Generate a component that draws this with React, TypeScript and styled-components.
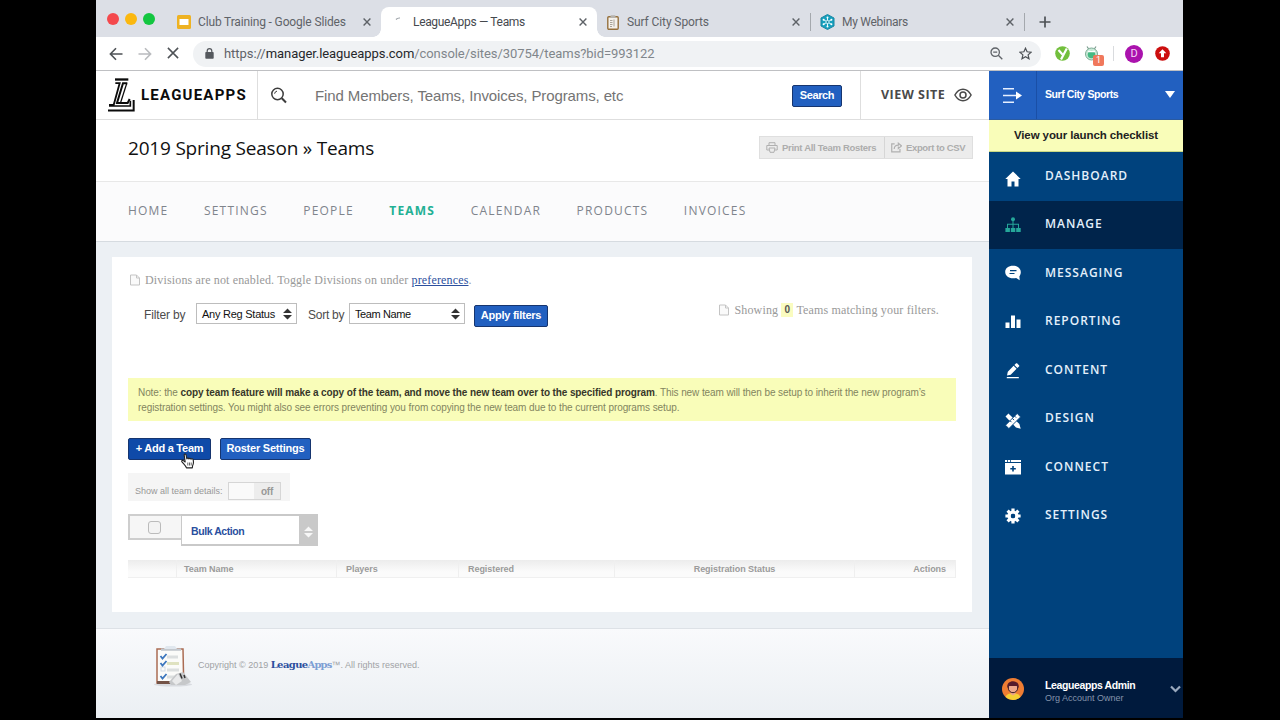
import React from 'react';
import styled, { createGlobalStyle, css } from 'styled-components';

const sans = '"Liberation Sans", Arial, sans-serif';
const open = '"Open Sans", sans-serif';
const serif = '"Liberation Serif", Georgia, serif';
const chromeFont = 'Roboto, sans-serif';

const Global = createGlobalStyle`
  * { box-sizing: border-box; }
  body { margin: 0; background: #000; overflow: hidden; }
  svg { display: block; flex: none; }
`;

const Screen = styled.div`
  width: 1280px;
  height: 720px;
  padding: 0 97px 2px 96px;
  background: #000;
`;
const Browser = styled.div`
  display: flex;
  flex-direction: column;
  height: 718px;
  background: #fff;
  overflow: hidden;
`;

/* ---------- Browser chrome ---------- */
const TabStrip = styled.div`
  display: flex;
  height: 37px;
  padding-top: 7px;
  background: #dcdfe6;
  font: 12px ${chromeFont};
`;
const Lights = styled.div`
  display: flex;
  gap: 6px;
  width: 73px;
  padding: 6px 0 0 11px;
`;
const Light = styled.i<{ $c: string }>`
  width: 12px;
  height: 12px;
  border-radius: 50%;
  background: ${(p) => p.$c};
`;
const Tab = styled.div<{ $w: number; $active?: boolean; $pad: number; $ls: number }>`
  position: relative;
  display: flex;
  align-items: center;
  width: ${(p) => p.$w}px;
  height: 30px;
  padding: 0 10px 0 ${(p) => p.$pad}px;
  letter-spacing: ${(p) => p.$ls}px;
  color: ${(p) => (p.$active ? '#45494e' : '#5f6368')};
  ${(p) =>
    p.$active &&
    css`
      background: #fff;
      border-radius: 8px 8px 0 0;
      &::before,
      &::after {
        content: '';
        position: absolute;
        bottom: 0;
        width: 8px;
        height: 8px;
      }
      &::before { left: -8px; background: radial-gradient(circle at 0 0, transparent 7.5px, #fff 8px); }
      &::after { right: -8px; background: radial-gradient(circle at 100% 0, transparent 7.5px, #fff 8px); }
    `}
`;
const TabIcon = styled.span<{ $w: number }>`
  display: flex;
  width: ${(p) => p.$w}px;
`;
const TabTitle = styled.span`
  flex: 1;
  white-space: nowrap;
`;
const TabDivider = styled.i`
  width: 1px;
  height: 18px;
  margin-top: 6px;
  background: #a4a8ad;
`;
const NewTab = styled.div`
  padding: 9px 0 0 14px;
`;
const Toolbar = styled.div`
  display: flex;
  align-items: center;
  height: 34px;
  padding: 0 12px 0 13px;
  border-bottom: 1px solid #bfc0c3;
  background: #fff;
`;
const NavIcons = styled.div`
  display: flex;
  gap: 15px;
  width: 84px;
`;
const Omnibox = styled.div`
  display: flex;
  align-items: center;
  width: 848px;
  height: 26px;
  padding: 0 9px 0 12px;
  border-radius: 13px;
  background: #f0f2f4;
  font: 13px ${chromeFont};
  color: #80868b;
`;
const Url = styled.span`
  flex: 1;
  margin-left: 10px;
  white-space: nowrap;
  letter-spacing: -0.06px;
  b { font-weight: 400; color: #26282b; }
  i { font-style: normal; color: #5f6368; }
`;
const OmniActions = styled.div`
  display: flex;
  gap: 16px;
`;
const Extensions = styled.div`
  display: flex;
  align-items: center;
  padding-left: 14px;
`;
const RobotSlot = styled.div`
  position: relative;
  margin-left: 14px;
`;
const CountBadge = styled.span`
  position: absolute;
  left: 9px;
  top: 9px;
  width: 11px;
  height: 11px;
  border-radius: 2px;
  background: #f0785c;
  color: #fff;
  font: 9px/11px ${chromeFont};
  text-align: center;
`;
const ExtDivider = styled.i`
  width: 1px;
  height: 15px;
  margin: 0 11px 0 14px;
  background: #d9dbde;
`;
const Avatar = styled.span`
  width: 18px;
  height: 18px;
  border-radius: 50%;
  background: #aa12ad;
  color: #f5d6f5;
  font: 11px/18px ${chromeFont};
  text-align: center;
`;
const UpdateDot = styled.span`
  display: flex;
  margin-left: 12px;
`;

/* ---------- Page shell ---------- */
const Page = styled.div`
  display: flex;
  height: 647px;
`;
const Main = styled.main`
  display: flex;
  flex-direction: column;
  width: 893px;
  background: #ecf0f4;
  font-family: ${sans};
`;
const Header = styled.header`
  display: flex;
  height: 49px;
  background: #fff;
  border-bottom: 1px solid #dedede;
`;
const Brand = styled.div`
  display: flex;
  width: 162px;
  padding: 7px 0 0 12px;
  border-right: 1px solid #dedede;
`;
const BrandName = styled.span`
  margin: 7px 0 0 6px;
  font: 700 15px/20px Roboto, ${open};
  letter-spacing: 1.22px;
  color: #0b0b0b;
`;
const SearchBar = styled.div`
  display: flex;
  align-items: center;
  width: 603px;
  padding: 1px 18px 0 12px;
  border-right: 1px solid #dedede;
`;
const Placeholder = styled.span`
  flex: 1;
  margin-left: 27px;
  font-size: 15px;
  letter-spacing: -0.11px;
  color: #747474;
  white-space: nowrap;
`;
const ViewSite = styled.div`
  display: flex;
  align-items: center;
  gap: 9px;
  padding-left: 20px;
  font: 700 12.5px ${open};
  letter-spacing: 0.5px;
  color: #4a4a4a;
  white-space: nowrap;
  span { margin-top: -2px; }
`;
const Button = styled.button<{ $w: number; $ls?: number; $dark?: boolean }>`
  width: ${(p) => p.$w}px;
  height: 22px;
  padding: 0 0 2px;
  border: 1px solid #16356f;
  border-radius: 2px;
  background: ${(p) => (p.$dark ? '#0f4aa8' : '#2260c0')};
  color: #fff;
  font: 700 11px ${sans};
  letter-spacing: ${(p) => p.$ls ?? -0.25}px;
  white-space: nowrap;
`;
const TitleBar = styled.div`
  display: flex;
  justify-content: space-between;
  height: 62px;
  padding: 16px 16px 0 32px;
  background: #fff;
  border-bottom: 1px solid #e8e8e8;
`;
const Title = styled.h1`
  margin: 0;
  font: 400 19px/25px ${open};
  letter-spacing: -0.2px;
  color: #111;
`;
const ToolGroup = styled.div`
  display: flex;
  width: 214px;
  height: 23px;
  border: 1px solid #dfdfdf;
  background: #ececec;
  color: #adadad;
  font: 700 9.5px ${sans};
`;
const Tool = styled.div<{ $w: number; $ls: number }>`
  display: flex;
  align-items: center;
  gap: 4px;
  width: ${(p) => p.$w}px;
  padding-left: 6px;
  letter-spacing: ${(p) => p.$ls}px;
  white-space: nowrap;
  & + & { border-left: 1px solid #d6d6d6; }
`;
const SubNav = styled.nav`
  display: flex;
  gap: 35.5px;
  height: 60px;
  padding: 0 32px;
  background: #fbfbfc;
  border-bottom: 1px solid #d6dbe0;
  font: 12px/57px ${open};
  letter-spacing: 1.2px;
  color: #7f848c;
`;
const SubItem = styled.span<{ $active?: boolean }>`
  ${(p) => p.$active && css`font-weight: 700; color: #22b094;`}
`;
const Card = styled.section`
  display: flex;
  flex-direction: column;
  width: 860px;
  height: 355px;
  margin: 15px 0 0 16px;
  padding: 13px 16px 0;
  background: #fff;
`;
const Muted = styled.div<{ $ls: number }>`
  display: flex;
  align-items: center;
  height: 20px;
  font: 12px ${serif};
  letter-spacing: ${(p) => p.$ls}px;
  color: #999;
  white-space: pre;
  svg { margin: 0 5px 0 2px; }
  a { color: #2c4f9e; text-decoration: underline; }
`;
const Zero = styled.b`
  width: 12px;
  margin-right: 3px;
  background: #fafcc0;
  color: #555;
  font: 700 10px/14px ${sans};
  text-align: center;
`;
const FilterRow = styled.div`
  display: flex;
  justify-content: space-between;
  height: 88px;
  padding-right: 17px;
`;
const Filters = styled.div`
  display: flex;
  padding: 13px 0 0 16px;
  font-size: 12px;
  color: #4c4c4c;
`;
const FilterLabel = styled.label<{ $w: number; $ls: number }>`
  width: ${(p) => p.$w}px;
  line-height: 22px;
  letter-spacing: ${(p) => p.$ls}px;
  white-space: nowrap;
  margin-top: 1px;
`;
const Select = styled.div<{ $w: number; $gap: number; $ls: number }>`
  display: flex;
  align-items: center;
  justify-content: space-between;
  width: ${(p) => p.$w}px;
  height: 21px;
  margin-right: ${(p) => p.$gap}px;
  padding: 0 4px 0 5px;
  border: 1.5px solid #bdbdbd;
  background: #fff;
  color: #111;
  font-size: 11px;
  letter-spacing: ${(p) => p.$ls}px;
`;
const SelectText = styled.span`
  line-height: 14px;
  white-space: nowrap;
`;
const Applied = styled.div`
  padding-top: 2px;
`;
const Results = styled.div`
  padding-top: 10px;
`;
const Notice = styled.p`
  height: 43px;
  margin: 0;
  padding: 8px 10px;
  background: #f9fdb9;
  color: #83855f;
  font-size: 10px;
  line-height: 14.5px;
  letter-spacing: -0.09px;
  white-space: nowrap;
  b { color: #37372a; letter-spacing: -0.11px; }
`;
const ButtonRow = styled.div`
  display: flex;
  gap: 9px;
  margin-top: 17px;
`;
const CursorAnchor = styled.div`
  position: relative;
  display: flex;
`;
const Cursor = styled.svg`
  position: absolute;
  left: 53px;
  top: 15px;
`;
const Details = styled.div`
  display: flex;
  justify-content: space-between;
  width: 162px;
  height: 28px;
  margin-top: 13px;
  padding: 9px 9px 1px 7px;
  background: #f5f5f5;
  color: #989898;
  font-size: 9px;
  line-height: 19px;
  white-space: nowrap;
`;
const Switch = styled.div`
  display: flex;
  width: 53px;
  height: 18px;
  border: 1px solid #d6d6d6;
  background: #fafafa;
`;
const SwitchOff = styled.span`
  width: 26px;
  margin-left: auto;
  background: #ededed;
  font-weight: 700;
  font-size: 10px;
  line-height: 18px;
  letter-spacing: -0.2px;
  text-align: center;
`;
const Bulk = styled.div`
  display: flex;
  align-items: flex-start;
  margin-top: 13px;
`;
const BulkCheck = styled.div`
  display: flex;
  width: 53px;
  height: 26px;
  padding: 5px 0 0 18px;
  border: 2px solid #cecece;
  border-right: 0;
  background: #f6f6f6;
`;
const Checkbox = styled.span`
  width: 13px;
  height: 13px;
  border: 1px solid #bbb;
  border-radius: 3px;
  background: #f3f3f3;
`;
const BulkSelect = styled.div`
  display: flex;
  width: 137px;
  height: 32px;
  border: 2px solid #c9c9c9;
  border-width: 2px 0 2px 1.5px;
  background: #fff;
  color: #2a4f9e;
  font: 700 10.5px/31px ${sans};
  letter-spacing: -0.42px;
`;
const BulkLabel = styled.span`
  flex: 1;
  padding-left: 9px;
`;
const BulkArrow = styled.span`
  display: flex;
  align-items: center;
  justify-content: center;
  width: 19px;
  padding-top: 3px;
  background: #c9c9c9;
`;
const TableHead = styled.div`
  display: grid;
  grid-template-columns: 49px 160px 122px 156px 240px 101px;
  height: 18px;
  margin-top: 14px;
  border-bottom: 1px solid #f0f0f0;
  background: linear-gradient(#ececec, #fbfbfb 70%);
  color: #9b9b9b;
  font: 700 9px/18px ${sans};
`;
const Th = styled.span<{ $align?: string; $pad?: string }>`
  padding: ${(p) => p.$pad ?? '0 9px'};
  border-right: 1px solid #efefef;
  letter-spacing: -0.05px;
  text-align: ${(p) => p.$align ?? 'left'};
`;
const Footer = styled.footer`
  display: flex;
  flex: 1;
  margin-top: 16px;
  padding: 16px 0 0 57px;
  border-top: 1px solid #dde1e6;
  background: linear-gradient(#f9fafc, #ebeff3);
  color: #a0a2a5;
  font-size: 9px;
  line-height: 41px;
`;
const Copyright = styled.div`
  display: flex;
  margin-left: 4px;
  white-space: pre;
`;
const FootBrand = styled.span<{ $light?: boolean }>`
  font: 700 10px/40px "DejaVu Serif", serif;
  letter-spacing: ${(p) => (p.$light ? -0.9 : -0.6)}px;
  color: ${(p) => (p.$light ? '#7d9fd4' : '#2c4f9e')};
`;

/* ---------- Sidebar ---------- */
const Sidebar = styled.aside`
  display: flex;
  flex-direction: column;
  width: 194px;
  background: #00427d;
  color: #fff;
`;
const OrgBar = styled.div`
  display: flex;
  height: 49px;
  background: #2260c0;
  border-bottom: 1px solid #2a5aa0;
`;
const Collapse = styled.div`
  display: flex;
  align-items: center;
  width: 48px;
  padding-left: 14px;
  border-right: 1px solid #1a4fa6;
`;
const OrgName = styled.div`
  display: flex;
  flex: 1;
  align-items: center;
  justify-content: space-between;
  padding: 0 8px 2px;
  font: 700 10.5px ${sans};
  letter-spacing: -0.42px;
`;
const Checklist = styled.div`
  height: 32px;
  border-bottom: 1px solid #c8d884;
  background: #f9fdb9;
  color: #222;
  font: 700 11.5px/31px ${sans};
  letter-spacing: -0.1px;
  text-align: center;
`;
const Menu = styled.div`
  flex: 1;
`;
const MenuItem = styled.div<{ $active?: boolean; $drop?: number }>`
  display: flex;
  align-items: center;
  height: 48.5px;
  padding-left: 16px;
  background: ${(p) => (p.$active ? '#00244b' : 'transparent')};
  font: 600 12px ${open};
  letter-spacing: 1px;
  color: #e4f0fb;
  svg { margin: ${(p) => p.$drop ?? 0}px 24px 0 0; color: ${(p) => (p.$active ? '#25a79a' : '#fff')}; }
  span { margin-top: -2px; }
`;
const User = styled.div`
  display: flex;
  align-items: center;
  height: 60px;
  padding: 2px 2px 0 13px;
  background: #001a3d;
`;
const UserText = styled.div`
  flex: 1;
  margin: 4px 0 0 21px;
  font: 700 10.5px/13px ${sans};
  letter-spacing: -0.38px;
  small {
    display: block;
    font: 9px/12px ${sans};
    letter-spacing: 0;
    color: #8494ab;
  }
`;

/* ---------- Icons ---------- */
const Cross = ({ s = 8, c = '#5f6368', w = 1.4 }) => (
  <svg width={s} height={s} viewBox="0 0 8 8" stroke={c} strokeWidth={w} fill="none">
    <path d="M.6.6l6.8 6.8M7.4.6L.6 7.4" />
  </svg>
);
const Doc = () => (
  <svg width="10" height="12" viewBox="0 0 10 12" fill="#fafafa" stroke="#c4c4c4">
    <path d="M.5 1h6L9.5 4v7H.5zM6.5 1v3h3" />
  </svg>
);
const Arrows = ({ c = '#333' }) => (
  <svg width="9" height="12" viewBox="0 0 9 12" fill={c}>
    <path d="M4.500 .5L9 5H0zM4.500 11.500L9 7H0z" />
  </svg>
);
const Hexagon = () => (
  <svg width="15" height="16" viewBox="0 0 15 16">
    <path d="M7.5.5L14 4v8l-6.500 3.500L1 12V4z" fill="#16a0bd" stroke="#1b86a3" strokeLinejoin="round" />
    <g stroke="#e2f6fa" strokeWidth="1">
      <path d="M7.500 3v10M3.200 5.500l8.600 5M11.800 5.500l-8.600 5" />
    </g>
    <circle cx="7.500" cy="8" r="2" fill="#bfe9f2" />
    <circle cx="7.500" cy="8" r="1" fill="#14809c" />
    <g fill="#fff">
      <circle cx="7.500" cy="3.500" r="1" /><circle cx="7.500" cy="12.500" r="1" />
      <circle cx="3.600" cy="5.700" r="1" /><circle cx="11.400" cy="5.700" r="1" />
      <circle cx="3.600" cy="10.300" r="1" /><circle cx="11.400" cy="10.300" r="1" />
    </g>
  </svg>
);
const Clipboard = () => (
  <svg width="12" height="15" viewBox="0 0 12 15">
    <rect x=".8" y="1.800" width="10.400" height="12.400" rx="1" fill="#f4f1ec" stroke="#96703c" strokeWidth="1.400" />
    <rect x="3.500" y=".3" width="5" height="2.700" rx=".6" fill="#b6b3ad" />
    <path d="M3 5.500h2.500M3 7.500h2.500M3 9.500h2.500M7 4.500v7M3 11.500h2" stroke="#aaa49a" />
  </svg>
);
const LogoMark = () => (
  <svg width="27" height="34" viewBox="0 0 81 102" fill="none" stroke="#0b0b0b">
    <path d="M21 4.500h40" strokeWidth="7" />
    <path d="M22 15.500h13L17 81H3" strokeWidth="5.500" />
    <path d="M58 15.500H45L27 75h32l6-12" strokeWidth="6" />
    <path d="M56 17L38 73" strokeWidth="4" />
    <path d="M3 84h64V68" strokeWidth="5" />
    <path d="M0 97.500h77V66" strokeWidth="6" />
  </svg>
);
const icon = (children: React.ReactNode) => (
  <svg width="16" height="16" viewBox="0 0 16 16" fill="currentColor">{children}</svg>
);
const icons = {
  home: icon(<path d="M8 .5L.3 8H2.500v7.500h4V10.500h3v5h4V8h2.200z" />),
  manage: icon(
    <>
      <circle cx="8" cy="2.300" r="2" />
      <path d="M7.500 3.500h1V6.800h5.500V11h-1V7.800H8.500V11h-1V7.800H3V11H2V6.800h5.500z" />
      <path d="M.4 11h4.500v4H.4zM5.800 11h4.500v4H5.800zM11.200 11h4.500v4h-4.500z" />
    </>
  ),
  messaging: icon(
    <>
      <path d="M8 .8C3.500.8.2 3.300.2 7s3.300 6.300 7.800 6.300c1.200 0 2.300-.1 3.200-.4L14.700 15.300 14.400 11.300C15.300 10.200 15.800 8.700 15.800 7 15.800 3.300 12.500.8 8 .8z" />
      <path d="M5 5.700h6.500M4.500 8.500H9.500" stroke="#00427d" strokeWidth="1.200" />
    </>
  ),
  reporting: icon(<path d="M.5 8.500h4V14h-4zM6 1.500h4V14H6zM11.500 5.500h4V14h-4z" />),
  content: icon(<path d="M2 12.500L2.800 8.700 8.600 2.800l3 3L5.700 11.700zM9.400 2l1.500-1.500c.4-.4 1-.4 1.400 0l1.700 1.700c.4.4.4 1 0 1.400L12.400 5zM1.800 14h12v1.300h-12z" />),
  design: icon(
    <>
      <path d="M.5 3.400L3.400.5l11 10.600 1.300 4.600-4.700-1.300z" />
      <path d="M.5 12.200L12.200.5l3.400 3.400L3.900 15.600z" stroke="#00427d" strokeWidth=".9" />
      <path d="M5 7.700l1.500 1.500M7.300 5.400l1.700 1.700M9.600 3.100l1.500 1.500" stroke="#00427d" strokeWidth="1" />
    </>
  ),
  connect: icon(
    <>
      <path d="M0 1h2.200v2H0zM3 1h2.200v2H3zM6 1h10v2H6zM0 4h16v11.500H0z" />
      <path d="M8 7v5.500M5.300 9.700h5.500" stroke="#00427d" strokeWidth="1.600" />
    </>
  ),
  settings: icon(
    <>
      <circle cx="8" cy="8" r="3.900" fill="none" stroke="currentColor" strokeWidth="3.400" />
      <g stroke="currentColor" strokeWidth="3.200">
        <path d="M8 .4v3M8 12.600v3M.4 8h3M12.600 8h3M2.600 2.600l2 2M11.400 11.400l2 2M2.600 13.400l2-2M11.400 4.600l2-2" />
      </g>
      <circle cx="8" cy="8" r="2.200" fill="#00427d" />
    </>
  ),
};

const menu: { label: string; icon: React.ReactNode; active?: boolean; drop?: number }[] = [
  { label: 'DASHBOARD', icon: icons.home, drop: 5 },
  { label: 'MANAGE', icon: icons.manage, active: true },
  { label: 'MESSAGING', icon: icons.messaging },
  { label: 'REPORTING', icon: icons.reporting },
  { label: 'CONTENT', icon: icons.content, drop: 2 },
  { label: 'DESIGN', icon: icons.design, drop: 5 },
  { label: 'CONNECT', icon: icons.connect },
  { label: 'SETTINGS', icon: icons.settings },
];

const Chrome = () => (
  <>
    <TabStrip>
      <Lights>
        <Light $c="#f4494d" /><Light $c="#fbb80f" /><Light $c="#13c640" />
      </Lights>
      <Tab $w={212} $pad={8} $ls={-0.15}>
        <TabIcon $w={21}>
          <svg width="14" height="14" viewBox="0 0 14 14">
            <rect width="14" height="14" rx="1.500" fill="#eeb222" />
            <rect x="2.500" y="4" width="9" height="6" fill="#fff" />
          </svg>
        </TabIcon>
        <TabTitle>Club Training - Google Slides</TabTitle>
        <Cross />
      </Tab>
      <Tab $w={216} $pad={13} $ls={-0.33} $active>
        <TabIcon $w={19}>
          <svg width="8" height="12" viewBox="0 0 8 12" fill="none" stroke="#9aa0a6" strokeWidth="1.200">
            <path d="M2 3.500Q3.500 1.800 6 2" />
          </svg>
        </TabIcon>
        <TabTitle>LeagueApps — Teams</TabTitle>
        <Cross />
      </Tab>
      <Tab $w={213} $pad={10} $ls={-0.1}>
        <TabIcon $w={20}><Clipboard /></TabIcon>
        <TabTitle>Surf City Sports</TabTitle>
        <Cross />
      </Tab>
      <TabDivider />
      <Tab $w={213} $pad={9} $ls={-0.28}>
        <TabIcon $w={22}><Hexagon /></TabIcon>
        <TabTitle>My Webinars</TabTitle>
        <Cross />
      </Tab>
      <TabDivider />
      <NewTab>
        <svg width="12" height="12" viewBox="0 0 12 12" stroke="#4e5256" strokeWidth="1.700"><path d="M6 .5v11M.5 6h11" /></svg>
      </NewTab>
    </TabStrip>
    <Toolbar>
      <NavIcons>
        <svg width="14" height="14" viewBox="0 0 14 14" fill="none" stroke="#4e5256" strokeWidth="1.600"><path d="M13.500 7H1.500M7 1.300L1.400 7 7 12.700" /></svg>
        <svg width="14" height="14" viewBox="0 0 14 14" fill="none" stroke="#b9bbbe" strokeWidth="1.600"><path d="M.5 7h12M7 1.300L12.600 7 7 12.700" /></svg>
        <Cross s={12} c="#4e5256" w={1} />
      </NavIcons>
      <Omnibox>
        <svg width="9" height="11" viewBox="0 0 9 11"><rect x=".3" y="4" width="8.400" height="6.800" rx=".8" fill="#55595e" /><path d="M2.200 4.500V3a2.300 2.300 0 014.600 0v1.500" fill="none" stroke="#55595e" strokeWidth="1.200" /></svg>
        <Url><i>https://</i><b>manager.leagueapps.com</b>/console/sites/30754/teams?bid=993122</Url>
        <OmniActions>
          <svg width="13" height="13" viewBox="0 0 13 13" fill="none" stroke="#5f6368" strokeWidth="1.300"><circle cx="5.200" cy="5.200" r="4.200" /><path d="M8.300 8.300l4 4M3.200 5.200h4" /></svg>
          <svg width="13" height="13" viewBox="0 0 13 13" fill="none" stroke="#4e5256" strokeWidth="1.200"><path d="M6.500 1.200l1.600 3.600 4 .4-3 2.700.9 3.900-3.500-2-3.500 2 .9-3.900-3-2.700 4-.4z" /></svg>
        </OmniActions>
      </Omnibox>
      <Extensions>
        <svg width="15" height="15" viewBox="0 0 15 15"><circle cx="7.500" cy="7.500" r="7.300" fill="#72bf3c" /><path d="M3.500 4l4 4.500M11.800 2.500L6 13.500" stroke="#fff" strokeWidth="2.200" /></svg>
        <RobotSlot>
          <svg width="15" height="16" viewBox="0 0 15 16">
            <path d="M3 .5l2 3M12 .5l-2 3" stroke="#7a9a8c" strokeWidth="1.200" />
            <circle cx="7.500" cy="8" r="6" fill="#c9ead8" stroke="#7dab95" />
            <circle cx="7.500" cy="8.500" r="3.800" fill="#45b983" />
            <path d="M4 5.500h7" stroke="#fff" strokeWidth="1.500" />
          </svg>
          <CountBadge>1</CountBadge>
        </RobotSlot>
        <ExtDivider />
        <Avatar>D</Avatar>
        <UpdateDot>
          <svg width="15" height="15" viewBox="0 0 15 15"><circle cx="7.500" cy="7.500" r="7.300" fill="#cc0e0e" /><path d="M7.500 3.300l3.800 4H9v4H6v-4H3.700z" fill="#fff" /></svg>
        </UpdateDot>
      </Extensions>
    </Toolbar>
  </>
);

const PageHeader = () => (
  <>
    <Header>
      <Brand><LogoMark /><BrandName>LEAGUEAPPS</BrandName></Brand>
      <SearchBar>
        <svg width="18" height="18" viewBox="0 0 18 18" fill="none" stroke="#3c3c3c"><circle cx="7.500" cy="7" r="5.700" strokeWidth="1.500" /><path d="M11.800 11.300l4.200 4.200" strokeWidth="2" /><path d="M4.600 6.700A3 3 0 017 4.100" /></svg>
        <Placeholder>Find Members, Teams, Invoices, Programs, etc</Placeholder>
        <Button $w={50} $ls={-0.4}>Search</Button>
      </SearchBar>
      <ViewSite>
        <span>VIEW SITE</span>
        <svg width="18" height="14" viewBox="0 0 18 14" fill="none" stroke="#4a4a4a" strokeWidth="1.500"><path d="M.9 7C3 3.200 5.800 1.200 9 1.200S15 3.200 17.100 7C15 10.800 12.200 12.800 9 12.800S3 10.800.9 7z" /><circle cx="9" cy="7" r="3" /></svg>
      </ViewSite>
    </Header>
    <TitleBar>
      <Title>2019 Spring Season » Teams</Title>
      <ToolGroup>
        <Tool $w={124} $ls={-0.3}>
          <svg width="12" height="11" viewBox="0 0 12 11" fill="none" stroke="#b0b0b0"><path d="M3 3.500V.7h6v2.800M3 8H.8V3.500h10.400V8H9M3 6h6L8 10.300H4z" /></svg>
          Print All Team Rosters
        </Tool>
        <Tool $w={88} $ls={-0.35}>
          <svg width="11" height="11" viewBox="0 0 12 11" fill="none" stroke="#b0b0b0" strokeWidth="1.300"><path d="M4 1.500H.8v8.700h9V7" /><path d="M3.500 7c0-3 2-4 4.500-4V.8L11.500 3.800 8 6.500V4.500" /></svg>
          Export to CSV
        </Tool>
      </ToolGroup>
    </TitleBar>
    <SubNav>
      {['HOME', 'SETTINGS', 'PEOPLE', 'TEAMS', 'CALENDAR', 'PRODUCTS', 'INVOICES'].map((t) => (
        <SubItem key={t} $active={t === 'TEAMS'}>{t}</SubItem>
      ))}
    </SubNav>
  </>
);

const TeamsCard = () => (
  <Card>
    <Muted $ls={0.15}><Doc />Divisions are not enabled. Toggle Divisions on under <a>preferences</a>.</Muted>
    <FilterRow>
      <Filters>
        <FilterLabel $w={52} $ls={-0.15}>Filter by</FilterLabel>
        <Select $w={101} $gap={11} $ls={-0.25}><SelectText>Any Reg Status</SelectText><Arrows /></Select>
        <FilterLabel $w={41} $ls={-0.25}>Sort by</FilterLabel>
        <Select $w={116} $gap={9} $ls={-0.4}><SelectText>Team Name</SelectText><Arrows /></Select>
        <Applied><Button $w={74}>Apply filters</Button></Applied>
      </Filters>
      <Results>
        <Muted $ls={0.17}><Doc />Showing <Zero>0</Zero>Teams matching your filters.</Muted>
      </Results>
    </FilterRow>
    <Notice>
      Note: the <b>copy team feature will make a copy of the team, and move the new team over to the specified program</b>. This new team will then be setup to inherit the new program’s<br />
      registration settings. You might also see errors preventing you from copying the new team due to the current programs setup.
    </Notice>
    <ButtonRow>
      <CursorAnchor>
        <Button $w={83} $dark>+ Add a Team</Button>
        <Cursor width="14" height="16" viewBox="0 0 14 16" fill="#fff" stroke="#222" strokeWidth="1.100" strokeLinejoin="round">
          <path d="M5.500 14.900C5 13 2.600 10.900 1 8.900c-.8-1.100.6-2.100 1.600-1.200L4.200 9 3.200 2.200C3 .7 4.700.5 5 1.900L5.900 6c.1-1.300 1.900-1.300 2 0 .3-1.100 1.900-1 2.100.3.500-.9 2-.6 2.200.6.400 2 .5 4-.6 5.800l-.3 2.200z" />
          <path d="M6.800 9.500v3M8.500 9.500v3M10.200 9.500v3" strokeWidth=".7" />
        </Cursor>
      </CursorAnchor>
      <Button $w={91} $ls={-0.22}>Roster Settings</Button>
    </ButtonRow>
    <Details>Show all team details:<Switch><SwitchOff>off</SwitchOff></Switch></Details>
    <Bulk>
      <BulkCheck><Checkbox /></BulkCheck>
      <BulkSelect><BulkLabel>Bulk Action</BulkLabel><BulkArrow><Arrows c="#f7f7f7" /></BulkArrow></BulkSelect>
    </Bulk>
    <TableHead>
      <Th /><Th $pad="0 7px">Team Name</Th><Th $pad="0 9px">Players</Th><Th>Registered</Th><Th $align="center">Registration Status</Th><Th $align="right">Actions</Th>
    </TableHead>
  </Card>
);

const PageFooter = () => (
  <Footer>
    <svg width="41" height="44" viewBox="0 0 41 44">
      <ellipse cx="20" cy="39.500" rx="19" ry="2" fill="#d8dbe0" />
      <path d="M4 4h26l.7 34H4z" fill="#fbfbf9" stroke="#ab6c53" strokeWidth="1.500" />
      <path d="M4 36h20v3H4z" fill="#745347" />
      <path d="M8 3.500h20v2.300H8z" fill="#c3c8ce" /><path d="M13 1h9l2 3H11z" fill="#e0e7ee" />
      <path d="M14 12h11M14 25h12M14 32h8" stroke="#dcdfdf" strokeWidth="3" />
      <path d="M14 18.500h12" stroke="#dfe2c0" strokeWidth="3" />
      <rect x="8" y="22" width="4" height="4" fill="none" stroke="#d3dbe4" />
      <path d="M7.500 11l2 2.500 4-4.500M7.500 18l2 2.500 4-4.500M7.500 31l2 2.500 4-4.500" fill="none" stroke="#3c76bd" strokeWidth="1.800" />
      <path d="M16 37l7-8 7-2 8 10-6 3H18z" fill="#c6c8ca" />
      <path d="M19 36l6-7 4 7-6 4z" fill="#e9eaeb" /><path d="M27 28.500l2 5M31 30l1 3" stroke="#333" strokeWidth="1.500" />
    </svg>
    <Copyright>
      Copyright © 2019 <FootBrand>League</FootBrand><FootBrand $light>Apps</FootBrand>™. All rights reserved.
    </Copyright>
  </Footer>
);

const SideNav = () => (
  <Sidebar>
    <OrgBar>
      <Collapse>
        <svg width="19" height="17" viewBox="0 0 19 17" stroke="#e6efff" strokeWidth="1.600" fill="none"><path d="M0 1.800h11M0 8.500h14M0 15.200h11" /><path d="M13 4.500l6 4-6 4z" fill="#fff" stroke="none" /></svg>
      </Collapse>
      <OrgName>
        Surf City Sports
        <svg width="10" height="7" viewBox="0 0 10 7" fill="#fff"><path d="M0 0h10L5 7z" /></svg>
      </OrgName>
    </OrgBar>
    <Checklist>View your launch checklist</Checklist>
    <Menu>
      {menu.map((m) => (
        <MenuItem key={m.label} $active={m.active} $drop={m.drop}>{m.icon}<span>{m.label}</span></MenuItem>
      ))}
    </Menu>
    <User>
      <svg width="22" height="22" viewBox="0 0 22 22">
        <circle cx="11" cy="11" r="11" fill="#ee7d33" />
        <path d="M3.500 19Q5 15.800 8.500 15.500h5Q17 15.800 18.500 19A11 11 0 013.500 19z" fill="#f5cf35" />
        <path d="M8.500 13h5v3L11 17.500 8.500 16z" fill="#eda488" />
        <circle cx="11" cy="10" r="4.700" fill="#efa98d" stroke="#3c1c28" />
        <path d="M5.300 10C4.700 6 7 3.200 11 3.200S17.300 6 16.700 10L15 8H7z" fill="#561b2b" />
      </svg>
      <UserText>Leagueapps Admin<small>Org Account Owner</small></UserText>
      <svg width="11" height="8" viewBox="0 0 11 8" fill="none" stroke="#9aa9be" strokeWidth="2.200"><path d="M1 1.500l4.500 4.500L10 1.500" /></svg>
    </User>
  </Sidebar>
);

export default function App() {
  return (
    <Screen>
      <Global />
      <Browser>
        <Chrome />
        <Page>
          <Main>
            <PageHeader />
            <TeamsCard />
            <PageFooter />
          </Main>
          <SideNav />
        </Page>
      </Browser>
    </Screen>
  );
}
